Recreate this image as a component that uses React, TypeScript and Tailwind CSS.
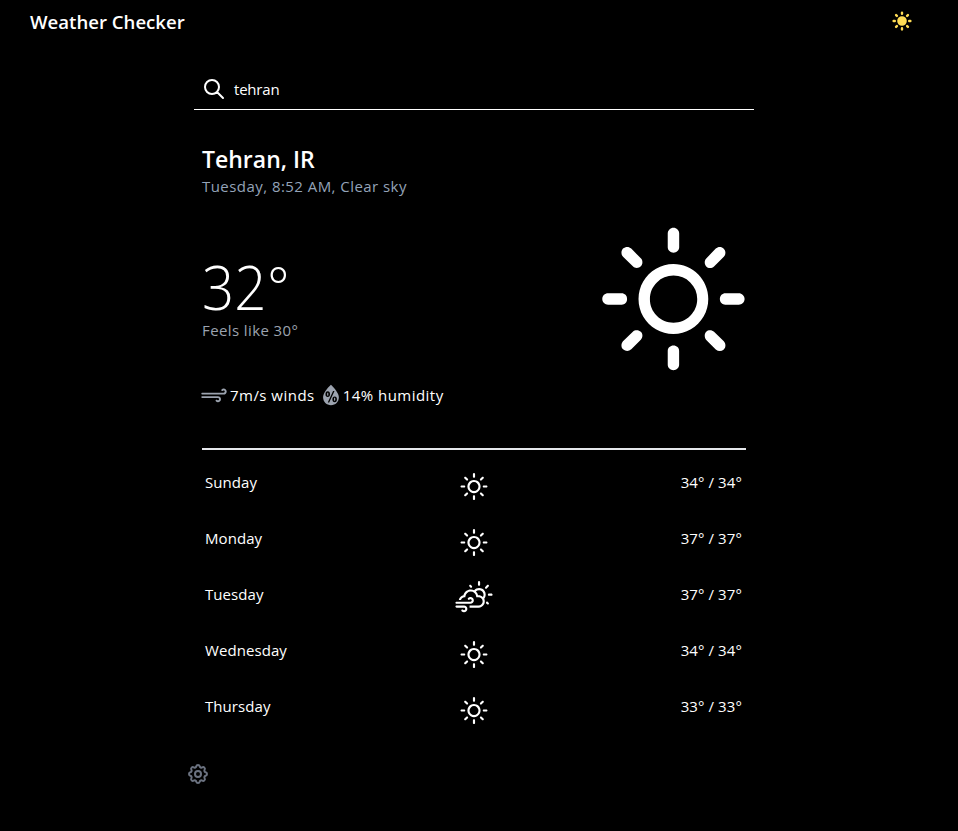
import { WiDaySunny, WiStrongWind, WiHumidity, WiDayCloudyGusts } from "react-icons/wi";
import { HiSun, HiOutlineCog, HiOutlineSearch } from "react-icons/hi";

const days = [
  { name: "Sunday", temp: "34° / 34°" },
  { name: "Monday", temp: "37° / 37°" },
  { name: "Tuesday", temp: "37° / 37°", windy: true },
  { name: "Wednesday", temp: "34° / 34°" },
  { name: "Thursday", temp: "33° / 33°" },
];

export default function App() {
  return (
    <div className="h-[831px] w-full overflow-hidden bg-black font-['Open_Sans','Noto_Sans',sans-serif] text-base text-white">
      <header className="flex h-11 items-center justify-between pr-[44px] pl-[30px]">
        <h1 className="text-[18.6px] leading-7 font-semibold">Weather Checker</h1>
        <HiSun className="mb-0.5 size-6 text-[#ffdc55]" />
      </header>
      <main className="ml-[194px] w-[560px]">
        <div className="mt-[24px] flex h-[42px] items-center border-b border-white pl-2">
          <HiOutlineSearch className="size-6" />
          <span className="mt-0.5 ml-2 text-[15px] tracking-[-0.2px]">tehran</span>
        </div>
        <section className="px-2 pt-8">
          <h2 className="text-[23px] leading-[35px] font-semibold">Tehran, IR</h2>
          <p className="-mt-px h-6 text-[15px] leading-5 tracking-[0.45px] text-[#94a3b8]">Tuesday, 8:52 AM, Clear sky</p>
          <div className="flex h-[183px] justify-between">
            <div className="pt-[56px]">
              <div className="flex h-[62px] origin-left scale-x-[0.94] text-[60px] leading-[62px] font-light">
                <span>32</span>
                <span className="ml-px text-[55px] leading-[60px]">°</span>
              </div>
              <p className="text-[15px] leading-6 tracking-[0.4px] text-[#9ca3af]">Feels like 30°</p>
            </div>
            <WiDaySunny className="mt-px -mr-[28px] size-[201px] shrink-0" />
          </div>
          <div className="flex h-6 items-center text-[15px] tracking-[0.47px]">
            <WiStrongWind className="-mt-px -ml-1 size-8 text-[#9ca3af]" />
            <span>7m/s winds</span>
            <WiHumidity className="-mt-px -mr-1 size-8 text-[#9ca3af]" />
            <span>14% humidity</span>
          </div>
          <div className="mt-[41px] h-0.5 bg-[#e5e7eb]" />
          <ul className="pt-1">
            {days.map((d) => (
              <li key={d.name} className="grid h-14 grid-cols-3 px-1 pt-4">
                <span className="-ml-px text-[15px] leading-6 tracking-[0.07px]">{d.name}</span>
                <span className="-mt-0.5 flex justify-center">
                  {d.windy ? <WiDayCloudyGusts className="size-[38px]" /> : <WiDaySunny className="size-[38px]" />}
                </span>
                <span className="text-right text-[15px] leading-6 tracking-[0.1px]">{d.temp}</span>
              </li>
            ))}
          </ul>
        </section>
        <HiOutlineCog className="mt-7 -ml-2 size-6 text-[#6b7280]" />
      </main>
    </div>
  );
}
